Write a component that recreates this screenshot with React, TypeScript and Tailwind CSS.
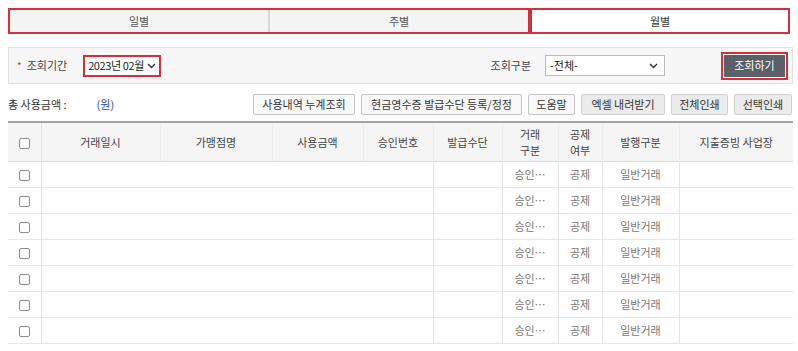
import React from "react";

const font = { fontFamily: '"Noto Sans CJK KR", "Noto Sans", sans-serif' } as React.CSSProperties;

function Chevron({ className = "" }: { className?: string }) {
  return (
    <svg className={className} width="9" height="6" viewBox="0 0 9 6" fill="none">
      <path d="M1 1l3.5 3.5L8 1" stroke="#333" strokeWidth="1.4" />
    </svg>
  );
}

function Check() {
  return <span className="inline-block w-[11px] h-[11px] rounded-[2px] border border-[#8c8c8c] bg-white align-middle" />;
}

const cols = [33, 119, 112, 91, 70, 69, 56, 44, 77, 114];

function Two({ a, b }: { a: string; b: string }) {
  return (
    <div className="flex flex-col items-center leading-[16px]">
      <span className="block">{a}</span>
      <span className="block">{b}</span>
    </div>
  );
}

export default function App() {
  const rows = Array.from({ length: 7 });
  return (
    <div className="w-[798px] h-[351px] bg-white text-[11px] text-[#333] overflow-hidden" style={font}>
      {/* tabs */}
      <div className="ml-[8px] mt-[8px] flex h-[26px] w-[782px]">
        <div className="flex w-[522px] border-2 border-[#d3303b]">
          <div className="flex-1 flex items-center justify-center bg-[#f4f4f4] text-[#555] border-r border-[#d6d6d6]">일별</div>
          <div className="flex-1 flex items-center justify-center bg-[#f4f4f4] text-[#555] border-l border-[#d6d6d6]">주별</div>
        </div>
        <div className="flex w-[260px] border-2 border-[#d3303b] bg-white items-center justify-center text-[#333]">월별</div>
      </div>

      {/* search panel */}
      <div className="ml-[8px] mt-[13px] w-[785px] h-[37px] border border-[#e2e2e2] bg-[#f7f7f7] flex items-center pr-[4px]">
        <span className="ml-[8px] text-[#d3303b] text-[10px]">*</span>
        <span className="ml-[5px] text-[#444]">조회기간</span>
        <div className="ml-[16px] h-[22px] w-[78px] border-2 border-[#d3303b] bg-white flex items-center pl-[3px] gap-[3px] text-[#222] whitespace-nowrap tracking-[-0.4px]">
          <span>2023년 02월</span>
          <Chevron />
        </div>
        <div className="flex-1" />
        <span className="text-[#444]">조회구분</span>
        <div className="ml-[14px] h-[21px] w-[120px] border border-[#bbb] bg-white flex items-center justify-between pl-[4px] pr-[6px] text-[#222]">
          <span>-전체-</span>
          <Chevron />
        </div>
        <div className="ml-[56px] h-[28px] w-[67px] border-2 border-[#d3303b] p-[1px] flex">
          <div className="flex-1 bg-[#5b5f68] text-white flex items-center justify-center rounded-[1px]">조회하기</div>
        </div>
      </div>

      {/* summary + buttons */}
      <div className="ml-[8px] mt-[10px] w-[784px] h-[21px] flex items-center">
        <span className="text-[#333]">총 사용금액 :</span>
        <span className="ml-[30px] text-[#1f4e9c]">(원)</span>
        <div className="flex-1" />
        <div className="flex gap-[6px]">
          <button className="h-[21px] w-[102px] border border-[#c4c4c4] rounded-[2px] bg-[#f9f9f9] text-[#333]">사용내역 누계조회</button>
          <button className="h-[21px] w-[161px] border border-[#c4c4c4] rounded-[2px] bg-[#f9f9f9] text-[#333]">현금영수증 발급수단 등록/정정</button>
          <button className="h-[21px] w-[47px] border border-[#c4c4c4] rounded-[2px] bg-[#f9f9f9] text-[#333]">도움말</button>
          <button className="h-[21px] w-[84px] border border-[#cfcfcf] rounded-[2px] bg-[#ebebeb] text-[#333]">엑셀 내려받기</button>
          <button className="h-[21px] w-[57px] border border-[#cfcfcf] rounded-[2px] bg-[#ebebeb] text-[#333]">전체인쇄</button>
          <button className="h-[21px] w-[58px] border border-[#cfcfcf] rounded-[2px] bg-[#ebebeb] text-[#333]">선택인쇄</button>
        </div>
      </div>

      {/* table */}
      <table className="ml-[8px] mt-[6px] w-[785px] table-fixed border-collapse border-t-2 border-[#a3a3a3]">
        <colgroup>
          {cols.map((w, i) => (
            <col key={i} style={{ width: w }} />
          ))}
        </colgroup>
        <thead>
          <tr className="h-[39px] bg-[#f5f5f5] text-[#444] border-b border-[#dcdcdc]">
            <th className="font-normal border-r border-[#e4e4e4]"><Check /></th>
            <th className="font-normal border-r border-[#ececec]">거래일시</th>
            <th className="font-normal border-r border-[#ececec]">가맹점명</th>
            <th className="font-normal border-r border-[#ececec]">사용금액</th>
            <th className="font-normal border-r border-[#ececec]">승인번호</th>
            <th className="font-normal border-r border-[#ececec]">발급수단</th>
            <th className="font-normal border-r border-[#ececec]"><Two a="거래" b="구분" /></th>
            <th className="font-normal border-r border-[#ececec]"><Two a="공제" b="여부" /></th>
            <th className="font-normal border-r border-[#ececec]">발행구분</th>
            <th className="font-normal">지출증빙 사업장</th>
          </tr>
        </thead>
        <tbody>
          {rows.map((_, i) => (
            <tr key={i} className="h-[26px] border-b border-[#e8e8e8] text-[#777] text-center">
              <td className="border-r border-[#e6e6e6]"><Check /></td>
              <td></td>
              <td></td>
              <td></td>
              <td></td>
              <td className="border-l border-[#e6e6e6]"></td>
              <td className="border-l border-[#e6e6e6]">승인…</td>
              <td className="border-l border-[#e6e6e6]">공제</td>
              <td className="border-l border-[#e6e6e6]">일반거래</td>
              <td className="border-l border-[#e6e6e6]"></td>
            </tr>
          ))}
        </tbody>
      </table>
    </div>
  );
}
